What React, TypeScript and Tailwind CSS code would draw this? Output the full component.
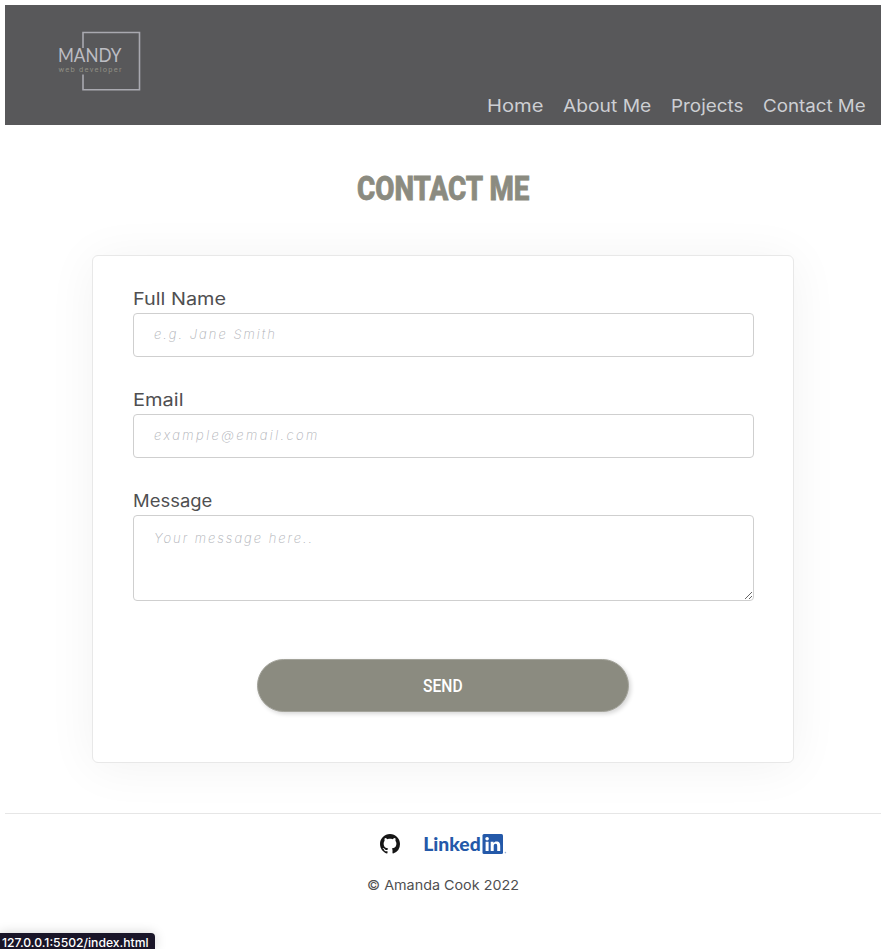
import { useLayoutEffect, useRef, useState } from "react";

const sans = "font-['Inter','Liberation_Sans',sans-serif]";

type FitProps = { text: string; width: number; className?: string };

// Stretches or condenses a single line so that it spans the given width.
function Fit({ text, width, className = "" }: FitProps) {
  const ref = useRef<HTMLSpanElement>(null);
  const [scale, setScale] = useState(1);
  useLayoutEffect(() => {
    if (ref.current) setScale(width / ref.current.offsetWidth);
  }, [width, text]);
  return (
    <span className={`flex justify-start whitespace-nowrap ${className}`} style={{ width }}>
      <span ref={ref} className="block shrink-0 origin-left" style={{ transform: `scaleX(${scale})` }}>
        {text}
      </span>
    </span>
  );
}

function Logo() {
  return (
    <svg className="ml-[48px] mt-[20px] h-[76px] w-[100px]" viewBox="53 25 100 76" fill="none">
      <path d="M83 48V32.5H139.5V89.7H83V74.5" stroke="#a9a9b0" strokeWidth="1.6" />
      <text x="58" y="62.2" textLength="63.5" lengthAdjust="spacingAndGlyphs" fontFamily="Lato, sans-serif" fontSize="18.5" fontWeight="400" fill="#bdbdc3">MANDY</text>
      <text x="58.5" y="71.5" textLength="63" fontFamily="Roboto, sans-serif" fontSize="7.5" fill="#8f8e84">web developer</text>
    </svg>
  );
}

const links = [
  { label: "Home", width: 56 },
  { label: "About Me", width: 88 },
  { label: "Projects", width: 72 },
  { label: "Contact Me", width: 103 },
];

const label = "h-[28px] text-[17.3px] leading-[28px] text-[#4f4f51]";
const field =
  "block w-full rounded-[4px] border border-[#cfcfcf] bg-white px-5 text-[13px] font-extralight text-[#58585a] outline-none placeholder:italic placeholder:text-[#aeb0b6]";

export default function App() {
  return (
    <div className={`relative h-[949px] w-[886px] overflow-hidden bg-white p-[5px] ${sans}`}>
      <header className="flex h-[120px] justify-between bg-[#58585a]">
        <Logo />
        <nav className="flex items-end gap-5 pb-[6px] pr-[15px] text-[17.3px] leading-[26px] text-[#cdcfd3]">
          {links.map((l) => (
            <a key={l.label}><Fit text={l.label} width={l.width} /></a>
          ))}
        </nav>
      </header>

      <main className="flex flex-col items-center">
        <h1 className="mt-[44px] h-10 font-['Roboto',sans-serif] text-[32.5px] font-extrabold leading-10 text-[#8b8b80] [-webkit-text-stroke:0.8px_#8b8b80]">
          <Fit text="CONTACT ME" width={172} />
        </h1>

        <form className="mt-[46px] h-[508px] w-[702px] rounded-[6px] border border-[#e8e8e8] bg-white pl-10 pr-[39px] pt-[29px] shadow-[0_4px_50px_rgba(0,0,0,0.055)]">
          <div className={label}><Fit text="Full Name" width={93} /></div>
          <input className={`${field} h-[44px] pb-[3px] tracking-[2px]`} placeholder="e.g. Jane Smith" />
          <div className={`${label} mt-[29px]`}><Fit text="Email" width={51} /></div>
          <input className={`${field} h-[44px] pb-[3px] tracking-[2.42px]`} placeholder="example@email.com" />
          <div className={`${label} mt-[29px]`}><Fit text="Message" width={79} /></div>
          <textarea className={`${field} h-[86px] resize pt-[12px] leading-5 tracking-[1.98px]`} placeholder="Your message here.." />
          <button
            type="button"
            className="ml-[124px] mt-[58px] flex h-[53px] w-[372px] items-center justify-center rounded-full border border-[#a3a39a] bg-[#8b8b80] font-['Roboto',sans-serif] text-[18px] font-medium text-white shadow-[2px_2px_4px_rgba(0,0,0,0.16)]"
          >
            <Fit text="SEND" width={40} />
          </button>
        </form>
      </main>

      <footer className="mt-[50px] flex flex-col items-center border-t border-[#e6e6e6] pt-[20px]">
        <div className="flex h-5 w-[127px] items-start justify-between">
          <svg className="h-5 w-5" viewBox="0 0 16 16" fill="#151515">
            <path d="M8 0C3.58 0 0 3.58 0 8c0 3.54 2.29 6.53 5.47 7.59.4.07.55-.17.55-.38 0-.19-.01-.82-.01-1.49-2.01.37-2.53-.49-2.69-.94-.09-.23-.48-.94-.82-1.13-.28-.15-.68-.52-.01-.53.63-.01 1.08.58 1.23.82.72 1.21 1.87.87 2.33.66.07-.52.28-.87.51-1.07-1.78-.2-3.64-.89-3.64-3.95 0-.87.31-1.59.82-2.15-.08-.2-.36-1.02.08-2.12 0 0 .67-.21 2.2.82.64-.18 1.32-.27 2-.27s1.36.09 2 .27c1.53-1.04 2.2-.82 2.2-.82.44 1.1.16 1.92.08 2.12.51.56.82 1.27.82 2.15 0 3.07-1.87 3.75-3.65 3.95.29.25.54.73.54 1.48 0 1.07-.01 1.93-.01 2.2 0 .21.15.46.55.38A8.01 8.01 0 0 0 16 8c0-4.42-3.58-8-8-8Z" />
          </svg>
          <svg className="h-5 w-[83px] overflow-visible" viewBox="0 0 83 20">
            <text x="-0.8" y="16.7" textLength="57.5" lengthAdjust="spacingAndGlyphs" fontFamily="Lato, sans-serif" fontSize="18.5" fontWeight="900" fill="#2459a9">Linked</text>
            <rect x="58.5" y="0" width="20.5" height="20" rx="1.5" fill="#2459a9" />
            <circle cx="63.1" cy="4.8" r="1.8" fill="#fff" />
            <path transform="translate(-.5 0)" d="M62.1 7.7h3V17h-3zM67.2 7.7H70V9c.6-1 1.6-1.6 3-1.6 3 0 3.7 1.9 3.7 4.5V17h-3v-4.6c0-1.3-.1-2.6-1.6-2.6-1.6 0-1.9 1.2-1.9 2.5V17h-3z" fill="#fff" />
            <circle cx="81.4" cy="18.6" r=".8" fill="#9ab2d6" />
          </svg>
        </div>
        <div className="mt-[21px] text-[13.5px] leading-5 text-[#4f4f51]">
          <Fit text="© Amanda Cook 2022" width={152} />
        </div>
      </footer>

      <div className="absolute bottom-0 left-0 h-[16px] w-[155px] rounded-tr-[4px] bg-[#191528] pl-[2px] pt-[1px] text-[12px] font-medium leading-[18px] text-white shadow-[0_0_12px_rgba(0,0,0,0.18)]">
        <Fit text="127.0.0.1:5502/index.html" width={147} />
      </div>
    </div>
  );
}
